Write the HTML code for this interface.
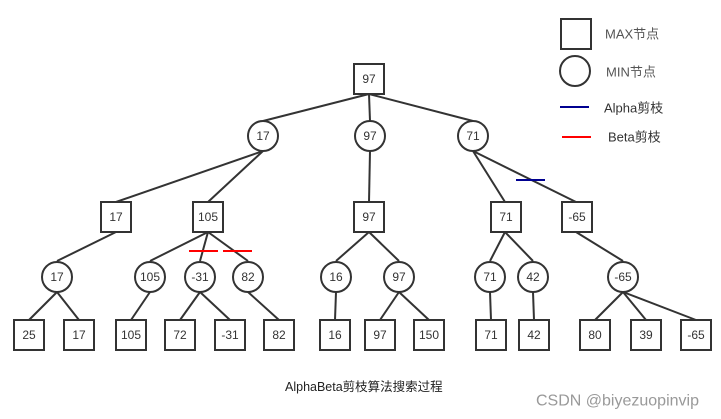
<!DOCTYPE html>
<html><head><meta charset="utf-8"><style>
html,body{margin:0;padding:0;background:#fff;width:721px;height:419px;overflow:hidden}
svg text{font-family:"Liberation Sans","Noto Sans CJK SC",sans-serif;font-size:12px;fill:#333;text-anchor:middle;dominant-baseline:central}
</style></head><body>
<svg width="721" height="419" viewBox="0 0 721 419" xmlns="http://www.w3.org/2000/svg">
<g stroke="#333" stroke-width="2" fill="none">
<line x1="369" y1="94" x2="263" y2="121"/>
<line x1="369" y1="94" x2="370" y2="121"/>
<line x1="369" y1="94" x2="473" y2="121"/>
<line x1="263" y1="151" x2="116" y2="202"/>
<line x1="263" y1="151" x2="208" y2="202"/>
<line x1="370" y1="151" x2="369" y2="202"/>
<line x1="473" y1="151" x2="505" y2="202"/>
<line x1="473" y1="151" x2="576" y2="202"/>
<line x1="116" y1="232" x2="57" y2="261"/>
<line x1="208" y1="232" x2="150" y2="261"/>
<line x1="208" y1="232" x2="200" y2="261"/>
<line x1="208" y1="232" x2="248" y2="261"/>
<line x1="369" y1="232" x2="336" y2="261"/>
<line x1="369" y1="232" x2="399" y2="261"/>
<line x1="505" y1="232" x2="490" y2="261"/>
<line x1="505" y1="232" x2="533" y2="261"/>
<line x1="576" y1="232" x2="623" y2="261"/>
<line x1="57" y1="292" x2="29" y2="320"/>
<line x1="57" y1="292" x2="79" y2="320"/>
<line x1="150" y1="292" x2="131" y2="320"/>
<line x1="200" y1="292" x2="180" y2="320"/>
<line x1="200" y1="292" x2="230" y2="320"/>
<line x1="248" y1="292" x2="279" y2="320"/>
<line x1="336" y1="292" x2="335" y2="320"/>
<line x1="399" y1="292" x2="380" y2="320"/>
<line x1="399" y1="292" x2="429" y2="320"/>
<line x1="490" y1="292" x2="491" y2="320"/>
<line x1="533" y1="292" x2="534" y2="320"/>
<line x1="623" y1="292" x2="595" y2="320"/>
<line x1="623" y1="292" x2="646" y2="320"/>
<line x1="623" y1="292" x2="696" y2="320"/>
</g>
<g stroke="#333" stroke-width="2" fill="#fff">
<rect x="354" y="64" width="30" height="30"/>
<circle cx="263" cy="136" r="15"/>
<circle cx="370" cy="136" r="15"/>
<circle cx="473" cy="136" r="15"/>
<rect x="101" y="202" width="30" height="30"/>
<rect x="193" y="202" width="30" height="30"/>
<rect x="354" y="202" width="30" height="30"/>
<rect x="491" y="202" width="30" height="30"/>
<rect x="562" y="202" width="30" height="30"/>
<circle cx="57" cy="277" r="15"/>
<circle cx="150" cy="277" r="15"/>
<circle cx="200" cy="277" r="15"/>
<circle cx="248" cy="277" r="15"/>
<circle cx="336" cy="277" r="15"/>
<circle cx="399" cy="277" r="15"/>
<circle cx="490" cy="277" r="15"/>
<circle cx="533" cy="277" r="15"/>
<circle cx="623" cy="277" r="15"/>
<rect x="14" y="320" width="30" height="30"/>
<rect x="64" y="320" width="30" height="30"/>
<rect x="116" y="320" width="30" height="30"/>
<rect x="165" y="320" width="30" height="30"/>
<rect x="215" y="320" width="30" height="30"/>
<rect x="264" y="320" width="30" height="30"/>
<rect x="320" y="320" width="30" height="30"/>
<rect x="365" y="320" width="30" height="30"/>
<rect x="414" y="320" width="30" height="30"/>
<rect x="476" y="320" width="30" height="30"/>
<rect x="519" y="320" width="30" height="30"/>
<rect x="580" y="320" width="30" height="30"/>
<rect x="631" y="320" width="30" height="30"/>
<rect x="681" y="320" width="30" height="30"/>
<rect x="561" y="19" width="30" height="30"/>
<circle cx="575" cy="71" r="15"/>
</g>
<line x1="560" y1="107" x2="589" y2="107" stroke="#000090" stroke-width="2"/>
<line x1="562" y1="137" x2="591" y2="137" stroke="#f00" stroke-width="2"/>
<line x1="189" y1="251" x2="218" y2="251" stroke="#f00" stroke-width="2"/>
<line x1="223" y1="251" x2="252" y2="251" stroke="#f00" stroke-width="2"/>
<line x1="516" y1="180" x2="545" y2="180" stroke="#000090" stroke-width="2"/>
<text x="369" y="79">97</text>
<text x="263" y="136">17</text><text x="370" y="136">97</text><text x="473" y="136">71</text>
<text x="116" y="217">17</text><text x="208" y="217">105</text><text x="369" y="217">97</text><text x="506" y="217">71</text><text x="577" y="217">-65</text>
<text x="57" y="277">17</text><text x="150" y="277">105</text><text x="200" y="277">-31</text><text x="248" y="277">82</text><text x="336" y="277">16</text><text x="399" y="277">97</text><text x="490" y="277">71</text><text x="533" y="277">42</text><text x="623" y="277">-65</text>
<text x="29" y="335">25</text><text x="79" y="335">17</text><text x="131" y="335">105</text><text x="180" y="335">72</text><text x="230" y="335">-31</text><text x="279" y="335">82</text><text x="335" y="335">16</text><text x="380" y="335">97</text><text x="429" y="335">150</text><text x="491" y="335">71</text><text x="534" y="335">42</text><text x="595" y="335">80</text><text x="646" y="335">39</text><text x="696" y="335">-65</text>
<text x="605" y="34" style="text-anchor:start;font-size:13px;fill:#555">MAX节点</text>
<text x="606" y="72" style="text-anchor:start;font-size:13px;fill:#555">MIN节点</text>
<text x="604" y="108" style="text-anchor:start;font-size:13px">Alpha剪枝</text>
<text x="608" y="137" style="text-anchor:start;font-size:13px">Beta剪枝</text>
<text x="285" y="387" style="text-anchor:start;font-size:12.5px;fill:#222">AlphaBeta剪枝算法搜索过程</text>
<text x="536" y="401" style="text-anchor:start;font-size:16px;fill:#999">CSDN @biyezuopinvip</text>
</svg>
</body></html>
